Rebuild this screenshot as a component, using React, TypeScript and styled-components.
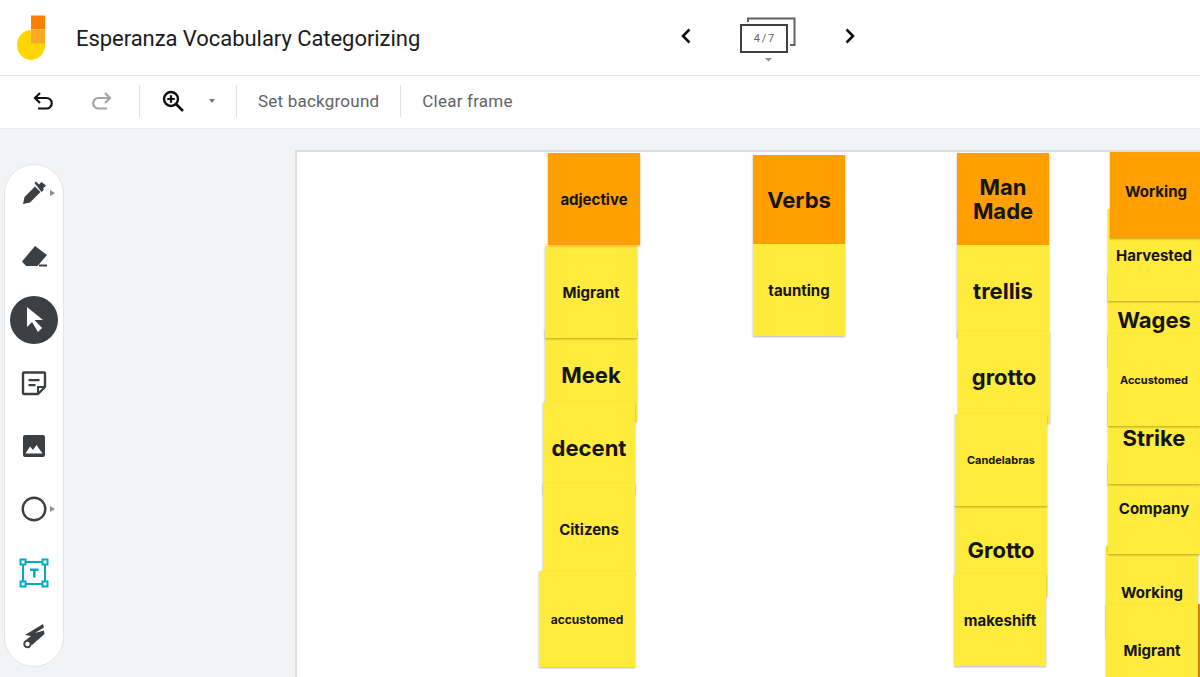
import React from 'react';
import styled, { createGlobalStyle } from 'styled-components';

const GlobalStyle = createGlobalStyle`
  html, body { margin: 0; padding: 0; height: 100%; overflow: hidden; background: #fff; }
  #root { height: 100%; }
`;

const Page = styled.div`
  display: flex;
  flex-direction: column;
  width: 1200px;
  height: 677px;
  overflow: hidden;
  font-family: Roboto, "Liberation Sans", sans-serif;
`;

const Header = styled.header`
  display: flex;
  align-items: center;
  height: 75px;
  flex: none;
  border-bottom: 1px solid #e6e7e9;
  padding-left: 17px;
`;

const Title = styled.h1`
  margin: 2px 0 0 31px;
  width: 598px;
  font-size: 22px;
  font-weight: 400;
  letter-spacing: -0.05px;
  color: #1b1b1b;
  white-space: nowrap;
`;

const Pager = styled.div`
  display: flex;
  align-items: center;
  margin-top: -3px;
`;

const Chevron = styled.svg`
  width: 24px;
  height: 24px;
  display: block;
`;

const FrameBadge = styled.div`
  position: relative;
  width: 56px;
  height: 46px;
  margin: 8px 42px 0 42px;
`;

const BadgeBack = styled.svg`
  position: absolute;
  left: 0;
  top: 0;
`;

const FrameCount = styled.span`
  position: absolute;
  left: 0;
  top: 7px;
  width: 48px;
  height: 29px;
  box-sizing: border-box;
  border: 2px solid #3c4043;
  display: flex;
  align-items: center;
  justify-content: center;
  font-size: 11px;
  word-spacing: -1px;
  color: #5f6368;
`;

const Logo = styled.svg`
  flex: none;
`;

const Toolbar = styled.div`
  display: flex;
  align-items: center;
  height: 50px;
  padding-bottom: 2px;
  flex: none;
  border-bottom: 1px solid #e8e9eb;
`;

const ToolIcon = styled.svg<{ $left: number }>`
  width: 24px;
  height: 24px;
  flex: none;
  margin-left: ${(p) => p.$left}px;
`;

const Caret = styled.span`
  width: 0;
  height: 0;
  margin: 0 21px 0 24px;
  border-left: 3.5px solid transparent;
  border-right: 3.5px solid transparent;
  border-top: 4px solid #777;
`;

const Divider = styled.span<{ $left?: number }>`
  width: 1px;
  height: 32px;
  background: #e0e1e3;
  margin-left: ${(p) => p.$left ?? 0}px;
`;

const ToolText = styled.span`
  font-size: 17px;
  letter-spacing: 0.22px;
  color: #5f6368;
  padding: 0 21px;
  white-space: nowrap;
`;

const Canvas = styled.main`
  flex: 1;
  display: flex;
  align-items: flex-start;
  background: #f1f3f4;
  min-height: 0;
  overflow: hidden;
`;

const Rail = styled.nav`
  flex: none;
  width: 58px;
  height: 499px;
  margin: 35px 0 0 4px;
  padding-bottom: 2px;
  background: #fff;
  border: 1px solid #e3e5e8;
  border-radius: 30px;
  display: grid;
  grid-template-rows: repeat(8, 63.3px);
  align-content: center;
  justify-items: center;
  align-items: center;
`;

const RailSlot = styled.div<{ $active?: boolean }>`
  position: relative;
  width: 48px;
  height: 48px;
  border-radius: 50%;
  display: flex;
  align-items: center;
  justify-content: center;
  background: ${(p) => (p.$active ? '#3c4043' : 'transparent')};
`;

const RailIcon = styled.svg`
  width: 30px;
  height: 30px;
  display: block;
`;

const Flyout = styled.span`
  position: absolute;
  right: 3px;
  top: 21px;
  width: 0;
  height: 0;
  border-top: 3.5px solid transparent;
  border-bottom: 3.5px solid transparent;
  border-left: 5px solid #8a8c8f;
`;

const Frame = styled.section`
  position: relative;
  flex: none;
  width: 1000px;
  height: 640px;
  margin: 21px 0 0 231px;
  background: #fff;
  box-sizing: border-box;
  border-left: 2px solid #dcdee1;
  border-top: 2px solid #dcdee1;
  overflow: hidden;
`;

const Note = styled.div<{ $x: number; $y: number; $w: number; $h: number; $orange?: boolean; $size: number; $z: number }>`
  position: absolute;
  left: ${(p) => p.$x - 297}px;
  top: ${(p) => p.$y - 152}px;
  width: ${(p) => p.$w}px;
  height: ${(p) => p.$h}px;
  z-index: ${(p) => p.$z};
  display: flex;
  align-items: center;
  justify-content: center;
  text-align: center;
  padding: 2px 2px 0;
  box-sizing: border-box;
  background: ${(p) => (p.$orange ? '#ff9f00' : '#ffeb3b')};
  box-shadow: 0 1px 2px rgba(0, 0, 0, 0.3);
  font-family: Inter, "Open Sans", sans-serif;
  font-weight: 700;
  font-size: ${(p) => p.$size}px;
  line-height: 1.08;
  color: #141414;
`;

const EdgeStrip = styled.div`
  position: absolute;
  left: ${1198 - 297}px;
  top: ${604 - 152}px;
  width: 4px;
  height: 80px;
  background: #e8860c;
  z-index: 1;
`;

type NoteData = { text: string; x: number; y: number; h?: number; w?: number; size: number; orange?: boolean; z?: number };

const notes: NoteData[] = [
  // first column
  { text: 'adjective', x: 548, y: 153, size: 15, orange: true, z: 9 },
  { text: 'Meek', x: 545, y: 329, size: 22, z: 1 },
  { text: 'Migrant', x: 545, y: 246, size: 15, z: 2 },
  { text: 'decent', x: 543, y: 402, size: 22, z: 3 },
  { text: 'Citizens', x: 543, y: 483, size: 15, z: 4 },
  { text: 'accustomed', x: 539, y: 571, w: 96, h: 96, size: 12, z: 5 },
  // verbs
  { text: 'Verbs', x: 753, y: 155, h: 89, size: 22, orange: true, z: 1 },
  { text: 'taunting', x: 753, y: 244, size: 15, z: 2 },
  // man made
  { text: 'Man Made', x: 957, y: 153, size: 22, orange: true, z: 1 },
  { text: 'trellis', x: 957, y: 245, size: 22, z: 2 },
  { text: 'grotto', x: 958, y: 331, size: 22, z: 3 },
  { text: 'Grotto', x: 955, y: 504, size: 22, z: 3 },
  { text: 'Candelabras', x: 955, y: 414, size: 11, z: 4 },
  { text: 'makeshift', x: 954, y: 574, size: 15, z: 5 },
  // working
  { text: 'Working', x: 1110, y: 145, h: 93, size: 15, orange: true, z: 9 },
  { text: 'Wages', x: 1108, y: 274, size: 22, z: 1 },
  { text: 'Harvested', x: 1108, y: 209, size: 15, z: 2 },
  { text: 'Strike', x: 1108, y: 392, size: 22, z: 3 },
  { text: 'Accustomed', x: 1108, y: 334, size: 11, z: 4 },
  { text: 'Company', x: 1108, y: 462, size: 15, z: 2 },
  { text: 'Working', x: 1106, y: 546, size: 15, z: 1 },
  { text: 'Migrant', x: 1106, y: 604, size: 15, z: 2 },
];

const railIcons: { flyout?: boolean; active?: boolean; body: React.ReactNode }[] = [
  {
    flyout: true,
    body: (
      <path fill="#3c4043" d="M4 26l1.500-7L16 8.500l5.500 5.500L11 24.500zM15.500 5l1.500-1.500 3 3L22.500 4 27 7.500l-3 3 1 1-2.500 2.500z" />
    ),
  },
  {
    body: (
      <>
        <path fill="#3c4043" d="M3 20.500L16 5l12 9-9.500 11H7z" />
        <rect x="20" y="23.500" width="8" height="2" fill="#3c4043" />
      </>
    ),
  },
  {
    active: true,
    body: <path fill="#fff" d="M8 2l16 13h-8.500L23 23l-4 4-6-10-5 5z" />,
  },
  {
    body: (
      <>
        <path fill="none" stroke="#3c4043" strokeWidth="2.400" strokeLinejoin="round" d="M5 4.500h20a1 1 0 0 1 1 1V19l-7 7H5a1 1 0 0 1-1-1V5.500a1 1 0 0 1 1-1z" />
        <path fill="#3c4043" d="M9.500 11h11v2.300h-11zM9.500 16h7v2.300h-7zM18 26v-8h8v2h-6v6z" />
      </>
    ),
  },
  {
    body: (
      <path fill="#3c4043" fillRule="evenodd" d="M6 4h18a2 2 0 0 1 2 2v18a2 2 0 0 1-2 2H6a2 2 0 0 1-2-2V6a2 2 0 0 1 2-2zm.500 18.500h17l-6-8.500-3.500 5-3-3.500z" />
    ),
  },
  {
    flyout: true,
    body: <circle cx="15" cy="15" r="11.300" fill="none" stroke="#3c4043" strokeWidth="2.400" />,
  },
  {
    body: (
      <>
        <rect x="4" y="4" width="22" height="22" fill="none" stroke="#00acc1" strokeWidth="2" />
        {[4, 26].map((cx) =>
          [4, 26].map((cy) => (
            <rect key={`${cx}-${cy}`} x={cx - 2.5} y={cy - 2.5} width="5" height="5" fill="#fff" stroke="#00acc1" strokeWidth="2" />
          )),
        )}
        <path fill="#00acc1" d="M11 10.500h8.500V13h-3v6.500h-2.500V13h-3z" />
      </>
    ),
  },
  {
    body: (
      <>
        <path fill="#3c4043" d="M6 14L24 3l1 3.500-9 5.500 9-2.500.500 3.500L13 24l-6-5 5-4z" />
        <circle cx="8.500" cy="23" r="3.200" fill="#fff" stroke="#3c4043" strokeWidth="2" />
      </>
    ),
  },
];

export default function App() {
  return (
    <Page>
      <GlobalStyle />
      <Header>
        <Logo width="28" height="46" viewBox="0 0 28 46">
          <ellipse cx="14" cy="30" rx="14" ry="15" fill="#ffd600" />
          <rect x="14" y="0.500" width="14" height="14" fill="#ff7f00" />
          <rect x="14" y="14.500" width="14" height="14" fill="#ffa726" />
        </Logo>
        <Title>Esperanza Vocabulary Categorizing</Title>
        <Pager>
          <Chevron viewBox="0 0 24 24">
            <path d="M15.500 5.500L9 12l6.500 6.500" fill="none" stroke="#111" strokeWidth="2.600" />
          </Chevron>
          <FrameBadge>
            <BadgeBack width="56" height="46" viewBox="0 0 56 46">
              <path d="M8 5V1.500h46.500V28H50" fill="none" stroke="#5f6368" strokeWidth="2" />
              <path d="M25 41h7l-3.500 3.500z" fill="#8a8c8f" />
            </BadgeBack>
            <FrameCount>4 / 7</FrameCount>
          </FrameBadge>
          <Chevron viewBox="0 0 24 24">
            <path d="M8.500 5.500L15 12l-6.500 6.500" fill="none" stroke="#111" strokeWidth="2.600" />
          </Chevron>
        </Pager>
      </Header>
      <Toolbar>
        <ToolIcon $left={32} viewBox="0 0 24 24">
          <path d="M8 4L3 9l5 5M3 9h11.500a5.250 5.250 0 0 1 0 10.500H6" fill="none" stroke="#111" strokeWidth="2.200" />
        </ToolIcon>
        <ToolIcon $left={33} viewBox="0 0 24 24">
          <path d="M16 4l5 5-5 5M21 9H9.500a5.250 5.250 0 0 0 0 10.500H18" fill="none" stroke="#a3a5a8" strokeWidth="2.200" />
        </ToolIcon>
        <Divider $left={26} />
        <ToolIcon $left={21} viewBox="0 0 24 24">
          <circle cx="10" cy="10" r="7" fill="none" stroke="#111" strokeWidth="2.400" />
          <path d="M10 6.200v7.600M6.200 10h7.600" stroke="#111" strokeWidth="2.200" />
          <path d="M15 15l7 7" stroke="#111" strokeWidth="2.600" />
        </ToolIcon>
        <Caret />
        <Divider />
        <ToolText>Set background</ToolText>
        <Divider />
        <ToolText>Clear frame</ToolText>
      </Toolbar>
      <Canvas>
        <Rail>
          {railIcons.map((icon, i) => (
            <RailSlot key={i} $active={icon.active}>
              <RailIcon viewBox="0 0 30 30">{icon.body}</RailIcon>
              {icon.flyout && <Flyout />}
            </RailSlot>
          ))}
        </Rail>
        <Frame>
          {notes.map((n) => (
            <Note
              key={`${n.text}-${n.x}-${n.y}`}
              $x={n.x}
              $y={n.y}
              $w={n.w ?? 92}
              $h={n.h ?? 92}
              $size={n.size}
              $orange={n.orange}
              $z={n.z ?? 1}
            >
              {n.text}
            </Note>
          ))}
          <EdgeStrip />
        </Frame>
      </Canvas>
    </Page>
  );
}
